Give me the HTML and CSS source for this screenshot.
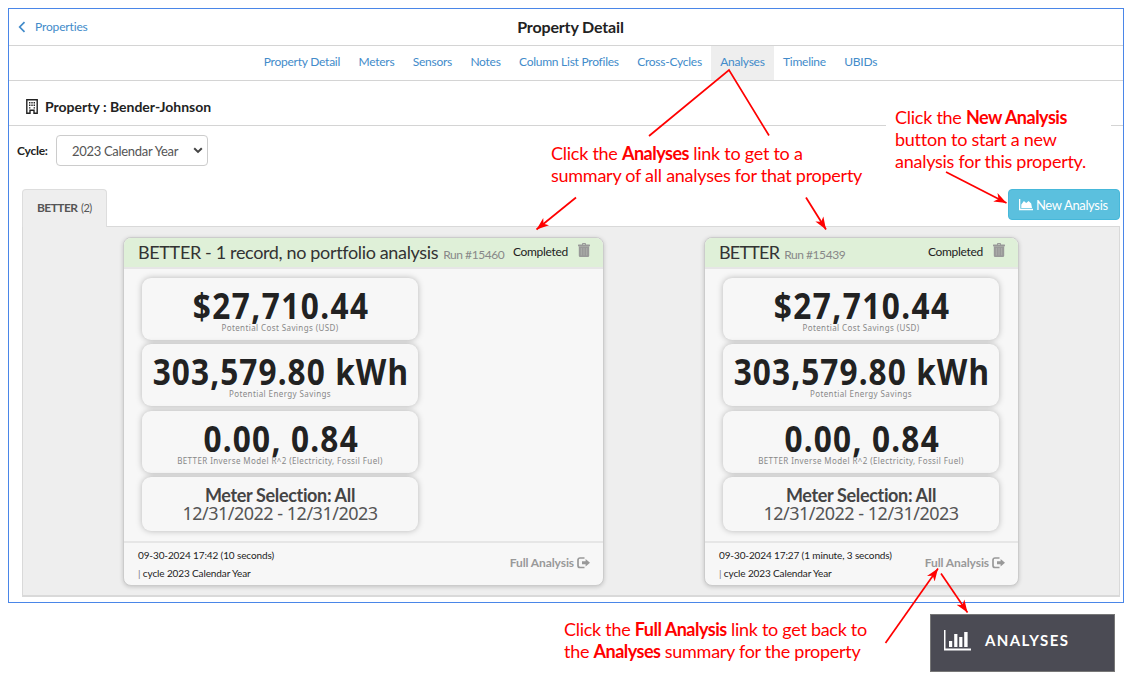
FILE: index.html
```
<!DOCTYPE html>
<html lang="en">
<head>
<meta charset="utf-8">
<title>Property Detail</title>
<link rel="stylesheet" href="styles.css">
</head>
<body>
<svg width="0" height="0" class="defs">
  <symbol id="trash" viewBox="0 0 12 14">
    <path d="M4 1.6V.9C4 .4 4.3 0 4.800 0h2.400c.5 0 .8.4.8.9v.7h3.500c.3 0 .5.2.5.5v1.100H0V2.100c0-.3.2-.5.500-.5zM5 1v.6h2V1z"/>
    <path d="M.8 3.200h10.400V12.500c0 .9-.5 1.500-1.300 1.500H2.100c-.8 0-1.300-.6-1.300-1.500z"/>
    <path d="M3.300 5v7.400M6 5v7.400M8.700 5v7.400" stroke="#b4b8b2" stroke-width=".7"/>
  </symbol>
  <symbol id="exit" viewBox="0 0 13 12">
    <path d="M7.500 1H3A2 2 0 0 0 1 3v5.500a2 2 0 0 0 2 2h4.500" fill="none" stroke="currentColor" stroke-width="1.700"/>
    <path d="M5 4.200h3.600V1.900L13 5.700 8.600 9.500V7.300H5z"/>
  </symbol>
</svg>

<main class="frame">
  <header class="topbar">
    <a class="back"><svg width="8" height="12" viewBox="0 0 8 12"><path d="M6.500 1.200 1.700 6l4.800 4.800" fill="none" stroke="currentColor" stroke-width="1.700"/></svg><span>Properties</span></a>
    <h1>Property Detail</h1>
  </header>
  <nav class="tabs">
    <a>Property Detail</a><a>Meters</a><a>Sensors</a><a>Notes</a><a>Column List Profiles</a><a>Cross-Cycles</a><a class="active">Analyses</a><a>Timeline</a><a>UBIDs</a>
  </nav>
  <div class="property">
    <svg width="12" height="15" viewBox="0 0 12 15"><path d="M.8.8h10.400v13.400H8v-2.900H4v2.900H.8z" fill="none" stroke="#222" stroke-width="1.400"/><path d="M3 3h1.400v1.400H3zM5.300 3h1.400v1.400H5.300zM7.600 3H9v1.400H7.600zM3 5.600h1.400V7H3zM5.300 5.600h1.400V7H5.300zM7.600 5.600H9V7H7.600zM3 8.200h1.400v1.400H3zM7.600 8.200H9v1.400H7.600z" fill="#222"/></svg>
    <h2>Property : Bender-Johnson</h2>
  </div>
  <div class="cycle">
    <label>Cycle:</label>
    <div class="select"><span>2023 Calendar Year</span><svg width="10" height="7" viewBox="0 0 10 7"><path d="M1.200 1.200 5 4.900l3.800-3.700" fill="none" stroke="#444" stroke-width="2"/></svg></div>
  </div>
  <div class="toolbar">
    <div class="folder"><b>BETTER</b> <span>(2)</span></div>
    <button class="new"><svg width="14" height="12" viewBox="0 0 14 12"><path d="M0 0h1.300v9.800H14V11.200H0zM2.300 8.900V5.500L4.900 2.100l2.300 2L9.600 2l2.600 2.600.8 4.300z"/></svg><span>New Analysis</span></button>
  </div>
  <section class="panel">
    <article class="card wide">
      <header class="card-head">
        <h3>BETTER - 1 record, no portfolio analysis</h3><small>Run #15460</small>
        <span class="status">Completed</span><svg class="trash" width="12" height="14"><use href="#trash"/></svg>
      </header>
      <div class="tiles">
        <div class="tile"><strong class="money">$27,710.44</strong><span>Potential Cost Savings (USD)</span></div>
        <div class="tile"><strong class="energy">303,579.80 kWh</strong><span>Potential Energy Savings</span></div>
        <div class="tile"><strong class="model">0.00, 0.84</strong><span>BETTER Inverse Model R^2 (Electricity, Fossil Fuel)</span></div>
        <div class="tile meter"><b>Meter Selection: All</b><em>12/31/2022 - 12/31/2023</em></div>
      </div>
      <footer class="card-foot">
        <div class="run"><p>09-30-2024 17:42 (10 seconds)</p><p><i>|</i> cycle 2023 Calendar Year</p></div>
        <a class="full">Full Analysis <svg width="13" height="12"><use href="#exit"/></svg></a>
      </footer>
    </article>
    <article class="card">
      <header class="card-head">
        <h3 class="short">BETTER</h3><small>Run #15439</small>
        <span class="status">Completed</span><svg class="trash" width="12" height="14"><use href="#trash"/></svg>
      </header>
      <div class="tiles">
        <div class="tile"><strong class="money">$27,710.44</strong><span>Potential Cost Savings (USD)</span></div>
        <div class="tile"><strong class="energy">303,579.80 kWh</strong><span>Potential Energy Savings</span></div>
        <div class="tile"><strong class="model">0.00, 0.84</strong><span>BETTER Inverse Model R^2 (Electricity, Fossil Fuel)</span></div>
        <div class="tile meter"><b>Meter Selection: All</b><em>12/31/2022 - 12/31/2023</em></div>
      </div>
      <footer class="card-foot">
        <div class="run"><p>09-30-2024 17:27 (1 minute, 3 seconds)</p><p><i>|</i> cycle 2023 Calendar Year</p></div>
        <a class="full">Full Analysis <svg width="13" height="12"><use href="#exit"/></svg></a>
      </footer>
    </article>
  </section>
</main>

<p class="note note-summary">Click the <b>Analyses</b> link to get to a<br>summary of all analyses for that property</p>
<p class="note note-new">Click the <b>New Analysis</b><br>button to start a new<br>analysis for this property.</p>
<p class="note note-full">Click the <b>Full Analysis</b> link to get back to<br>the <b>Analyses</b> summary for the property</p>

<div class="menu-item">
  <svg width="27" height="21" viewBox="0 0 27 21"><path d="M0 0h1.500v18.500H27V20.500H0zM5 11h3.200v6H5zM10.200 4h3.200v13h-3.200zM15.200 7h3.200v10h-3.200zM20.200 2h3.400v15h-3.400z"/></svg>
  <span>ANALYSES</span>
</div>

<svg class="arrows" width="1127" height="675" viewBox="0 0 1127 675">
  <defs><marker id="head" markerUnits="userSpaceOnUse" markerWidth="14" markerHeight="12" refX="12.500" refY="5" orient="auto"><path d="M12.500 5 0 .3 3.500 5 0 9.700z" fill="#f00"/></marker></defs>
  <g fill="none" stroke="#f00" stroke-width="1.700">
    <path d="M649 136 729 70 769 135.500"/>
    <path d="M576 197.500 536.500 229.500" marker-end="url(#head)"/>
    <path d="M806 197.500 826 229.500" marker-end="url(#head)"/>
    <path d="M946 172 1006.500 203" marker-end="url(#head)"/>
    <path d="M885.500 643 938 568.500" marker-end="url(#head)"/>
    <path d="M941 573.500 967.500 612.500" marker-end="url(#head)"/>
  </g>
</svg>
</body>
</html>
```
FILE: styles.css
```
* { box-sizing: border-box; }
body {
  position: relative;
  margin: 0;
  width: 1127px;
  height: 675px;
  overflow: hidden;
  background: #fff;
  color: #222;
  font-family: Lato, "Noto Sans", sans-serif;
}
h1, h2, h3, p { margin: 0; }
svg { display: block; flex: none; fill: currentColor; }
.defs { position: absolute; }

.frame {
  margin: 8px 3px 0 8px;
  height: 595px;
  border: 1px solid #4a86e8;
}
.topbar {
  display: grid;
  grid-template-columns: 1fr auto 1fr;
  align-items: center;
  height: 37px;
  padding-left: 9px;
  border-bottom: 1px solid #d4d4d4;
}
.topbar h1 { font-size: 16px; letter-spacing: -.15px; line-height: 20px; }
.back { display: flex; align-items: center; gap: 9px; color: #428bca; font-size: 12px; letter-spacing: -.15px; }
.back span { margin-top: -1px; }

.tabs {
  display: flex;
  justify-content: center;
  height: 35px;
  padding-left: 9px;
  border-bottom: 1px solid #d4d4d4;
}
.tabs a {
  padding: 0 9.200px;
  color: #428bca;
  font-size: 12px;
  letter-spacing: -.25px;
  line-height: 32px;
}
.tabs .active { background: #eee; }

.property {
  display: flex;
  align-items: center;
  gap: 7px;
  height: 45px;
  padding: 7px 0 0 17px;
  border-bottom: 1px solid #d4d4d4;
}
.property h2 { font-size: 14px; line-height: 18px; }

.cycle { display: flex; align-items: center; gap: 8px; margin: 9px 0 0 8px; height: 31px; }
.cycle label { font-size: 12px; font-weight: 700; letter-spacing: -.25px; width: 31px; }
.select {
  display: flex;
  align-items: center;
  justify-content: space-between;
  width: 152px;
  height: 31px;
  padding: 0 4px 0 15px;
  border: 1px solid #ccc;
  border-radius: 4px;
  color: #555;
  font-size: 13px;
  letter-spacing: -.3px;
}

.toolbar { display: flex; justify-content: space-between; align-items: flex-start; height: 37px; margin: 23px 3px 0 13px; }
.folder {
  height: 38px;
  width: 85px;
  padding-left: 14px;
  border: 1px solid #ddd;
  border-bottom: 0;
  border-radius: 4px 4px 0 0;
  background: #eee;
  color: #555;
  font-size: 12px;
  line-height: 35px;
  letter-spacing: -.55px;
  position: relative;
  z-index: 1;
}
.folder span { font-size: 11px; margin-left: 1px; }
.new {
  display: flex;
  align-items: center;
  gap: 3px;
  width: 112px;
  height: 31px;
  padding: 0 0 0 10px;
  border: 1px solid #46b8da;
  border-radius: 4px;
  background: #5bc0de;
  color: #fff;
  font: 13px Lato, sans-serif;
  letter-spacing: -.35px;
}

.panel {
  display: flex;
  gap: 100px;
  height: 371px;
  margin: 0 3px 0 13px;
  padding: 10px 0 0 100px;
  border: 1px solid #d9d9d9;
  border-width: 1px 1px 2px 1px;
  background: #eee;
}
.card {
  display: flex;
  flex-direction: column;
  width: 315px;
  height: 349px;
  border: 1px solid #ccc;
  border-radius: 8px;
  background: #f7f7f7;
  box-shadow: 0 1px 4px rgba(0, 0, 0, .18);
  overflow: hidden;
}
.card.wide { width: 481px; }
.card-head {
  display: flex;
  align-items: baseline;
  height: 31px;
  padding: 0 13px 0 14px;
  border-bottom: 2px solid #e6e6e6;
  background: #dff0d8;
  line-height: 28px;
}
.card-head h3 { font-size: 18px; font-weight: 400; letter-spacing: -.35px; color: #333; white-space: nowrap; }
.card-head h3.short { letter-spacing: -.8px; }
.card-head small { margin-left: 5px; font-size: 12px; letter-spacing: -.45px; color: #888; white-space: nowrap; }
.status { margin-left: auto; font-size: 12px; letter-spacing: -.3px; position: relative; top: -3px; }
.trash { align-self: flex-start; margin: 5px 0 0 10px; color: #999; }

.tiles { display: flex; flex-direction: column; gap: 4.500px; width: 276px; margin: 8.500px 0 0 18px; }
.tile {
  display: flex;
  flex-direction: column;
  align-items: center;
  height: 62px;
  padding-top: 8px;
  border-radius: 9px;
  background: #f7f7f7;
  box-shadow: 0 0 6px rgba(0, 0, 0, .26);
  white-space: nowrap;
}
/* Narrowed figures with open spacing between them */
.tile strong {
  padding-left: 2px;
  font: 700 35.500px/38px "Noto Sans", sans-serif;
  transform: scaleX(.89);
}
.tile .money { letter-spacing: 1.600px; }
.tile .energy { letter-spacing: 1.200px; }
.tile .model { letter-spacing: 1.350px; }
.tile span { margin-top: -1px; font: 8px/10px "Noto Sans", sans-serif; letter-spacing: .4px; color: #888; }
.meter { height: 54px; padding-top: 9px; color: #555; }
.meter b { font-size: 18px; line-height: 19px; letter-spacing: -.35px; color: #444; }
.meter em { font: 18px/17px "Noto Sans", sans-serif; letter-spacing: -.5px; }

.card-foot {
  display: flex;
  justify-content: space-between;
  margin-top: auto;
  height: 44px;
  padding: 4px 13px 0 14px;
  border-top: 2px solid #e6e6e6;
}
.run { font-size: 10px; line-height: 17.500px; letter-spacing: -.12px; }
.run i { font-style: normal; color: #777; }
.full { display: flex; gap: 3px; align-items: center; height: 31px; color: #999; font-size: 12px; font-weight: 700; letter-spacing: -.1px; }

.note { position: absolute; color: #f00; font-size: 18px; line-height: 22px; letter-spacing: -.26px; white-space: nowrap; }
.note b { letter-spacing: -.5px; }
.note-summary { left: 551px; top: 142px; }
.note-new { left: 886px; top: 106px; width: 225px; padding-left: 9px; background: #fff; }
.note-full { left: 564px; top: 618px; letter-spacing: -.28px; }

.menu-item {
  position: absolute;
  left: 930px;
  top: 614px;
  display: flex;
  align-items: center;
  gap: 14px;
  width: 185px;
  height: 58px;
  padding: 0 0 5px 13px;
  border: 1px solid #777;
  background: #4b4b54;
  color: #fff;
  font-size: 15px;
  font-weight: 700;
  letter-spacing: 1.400px;
}
.menu-item span { margin-top: -2px; }
.arrows { position: absolute; left: 0; top: 0; }
```
